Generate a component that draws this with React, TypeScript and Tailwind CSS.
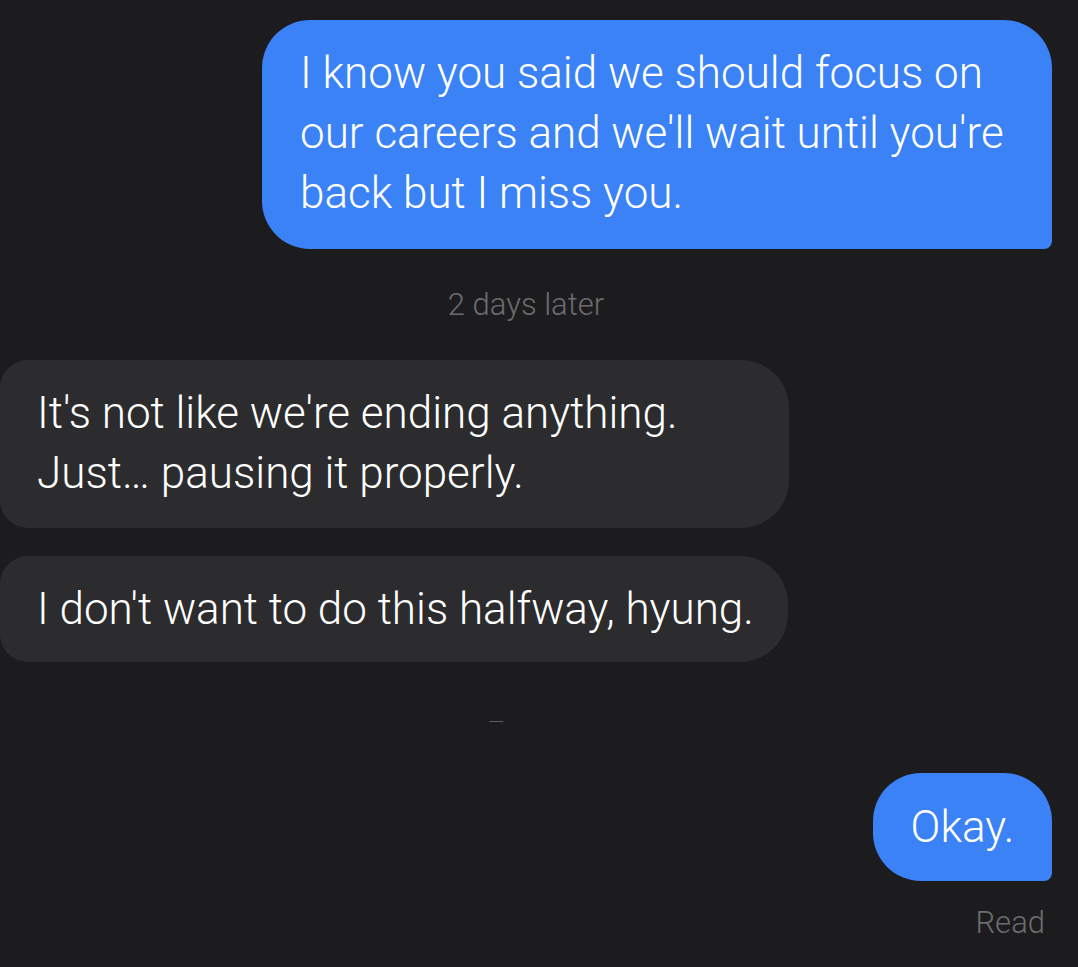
const sent = 'bg-[#3b82f6] text-white'
const received = 'bg-[#2c2c2e] text-white'

export default function App() {
  return (
    <div className="min-h-screen bg-[#1c1c1e] pt-5 pr-[26px] font-['Roboto',sans-serif] text-[44px] font-light leading-[60px]">
      <div className="flex justify-end">
        <div className={`${sent} w-[790px] whitespace-nowrap rounded-[48px] rounded-br-[8px] pl-[38px] pr-[28px] pt-[23px] pb-[26px]`}>
          I know you said we should focus on
          <br />
          our careers and we'll wait until you're
          <br />
          back but I miss you.
        </div>
      </div>

      <p className="mt-9 text-center text-[31px] leading-[40px] text-[#6c6c6e]">2 days later</p>

      <div className="mt-[35px] flex flex-col items-start gap-[28px]">
        <div className={`${received} w-[789px] whitespace-nowrap rounded-l-[28px] rounded-r-[48px] pl-[37px] pr-[30px] pt-[23px] pb-[25px]`}>
          It's not like we're ending anything.
          <br />
          Just… pausing it properly.
        </div>
        <div className={`${received} w-[788px] whitespace-nowrap rounded-l-[28px] rounded-r-[48px] pl-[37px] pr-[30px] pt-[23px] pb-[23px]`}>
          I don't want to do this halfway, hyung.
        </div>
      </div>

      <div className="mt-[50px] pl-[488px] text-[21px] leading-[20px] text-[#5f5f61]">—</div>

      <div className="mt-[41px] flex justify-end">
        <div className={`${sent} flex h-[108px] w-[179px] items-center justify-center rounded-[48px] rounded-br-[8px]`}>
          Okay.
        </div>
      </div>

      <p className="mt-[22px] pr-[7px] text-right text-[31px] leading-[40px] text-[#6c6c6e]">Read</p>
    </div>
  )
}
